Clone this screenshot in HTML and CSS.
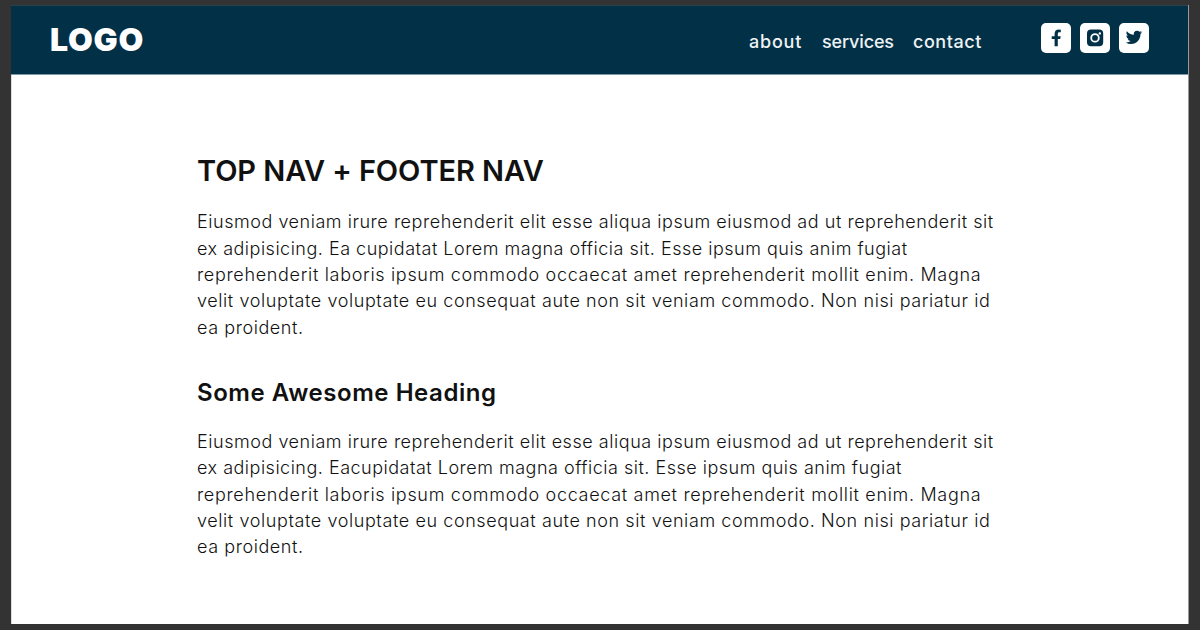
FILE: index.html
```html
<!DOCTYPE html>
<html lang="en">
<head>
<meta charset="utf-8">
<title>Top nav + footer nav</title>
<link rel="stylesheet" href="styles.css">
</head>
<body>
<div class="page">
  <header class="top">
    <a class="logo">LOGO</a>
    <nav class="links"><a class="about">about</a><a class="services">services</a><a class="contact">contact</a></nav>
    <div class="social">
      <a class="icon"><svg viewBox="0 0 30 30"><path d="M13.6 23.2v-7.1h-2.9v-2.9h2.9v-2.4c0-2.9 1.7-4.3 4.2-4.3l2 .2v2.6h-1.4c-1.2 0-1.6.7-1.6 1.5v2.4h2.900l-.5 2.9h-2.4v7.1z"/></svg></a>
      <a class="icon"><svg viewBox="0 0 30 30"><path fill-rule="evenodd" d="M11 6.5h8.2a4 4 0 0 1 4 4v8.700a4 4 0 0 1-4 4H11a4 4 0 0 1-4-4v-8.700a4 4 0 0 1 4-4zM15 10.200a4.700 4.700 0 1 0 0 9.400 4.700 4.700 0 0 0 0-9.400zm0 1.800a2.900 2.900 0 1 1 0 5.800 2.900 2.900 0 0 1 0-5.800zM19.800 9.200a1.200 1.200 0 1 0 0 2.400 1.200 1.200 0 0 0 0-2.400z"/></svg></a>
      <a class="icon"><svg viewBox="0 0 30 30"><path transform="translate(6.800 6.200) scale(.68)" d="M23.950 4.570a10 10 0 0 1-2.820.77 4.960 4.960 0 0 0 2.160-2.720c-.95.550-2 .950-3.130 1.180a4.920 4.920 0 0 0-8.380 4.480C7.690 8.090 4.070 6.130 1.640 3.160a4.820 4.820 0 0 0-.67 2.480c0 1.710.87 3.210 2.190 4.100a4.900 4.900 0 0 1-2.230-.62v.06a4.920 4.920 0 0 0 3.950 4.830 5 5 0 0 1-2.210.08 4.940 4.940 0 0 0 4.600 3.420A9.870 9.870 0 0 1 0 19.540a14 14 0 0 0 7.550 2.210c9.050 0 14-7.500 14-13.980l-.02-.64a9.940 9.940 0 0 0 2.420-2.560z"/></svg></a>
    </div>
  </header>
  <main class="content">
    <h1 class="title">TOP NAV + FOOTER NAV</h1>
    <p class="copy">
      <span class="line l1">Eiusmod veniam irure reprehenderit elit esse aliqua ipsum eiusmod ad ut reprehenderit sit</span>
      <span class="line l2">ex adipisicing. Ea cupidatat Lorem magna officia sit. Esse ipsum quis anim fugiat</span>
      <span class="line l3">reprehenderit laboris ipsum commodo occaecat amet reprehenderit mollit enim. Magna</span>
      <span class="line l4">velit voluptate voluptate eu consequat aute non sit veniam commodo. Non nisi pariatur id</span>
      <span class="line l5">ea proident.</span>
    </p>
    <h2 class="heading">Some Awesome Heading</h2>
    <p class="copy">
      <span class="line l1">Eiusmod veniam irure reprehenderit elit esse aliqua ipsum eiusmod ad ut reprehenderit sit</span>
      <span class="line l2">ex adipisicing. Eacupidatat Lorem magna officia sit. Esse ipsum quis anim fugiat</span>
      <span class="line l3">reprehenderit laboris ipsum commodo occaecat amet reprehenderit mollit enim. Magna</span>
      <span class="line l4">velit voluptate voluptate eu consequat aute non sit veniam commodo. Non nisi pariatur id</span>
      <span class="line l5">ea proident.</span>
    </p>
  </main>
</div>
</body>
</html>
```
FILE: styles.css
```css
* { box-sizing: border-box; }
body { margin: 0; height: 630px; padding: 5px 11px 6px; background: #333; overflow: hidden; font-family: Inter, sans-serif; }
.page { height: 619px; background: #fff; border-right: 1px solid #999; border-left: 1px solid #dcdcdc; }
.top { height: 70px; margin-left: -1px; padding: 0 39px; display: flex; align-items: center; background: #023047; border-top: 1px solid #25424d; border-bottom: 1px solid #7f98a5; color: #fff; }
.logo { font-size: 32px; font-weight: 900; line-height: 36px; letter-spacing: .8px; margin-right: auto; }
.links { display: flex; gap: 19px; font-size: 18px; font-weight: 500; line-height: 24px; color: #eef2f4; }
.links a { white-space: nowrap; padding-top: 3px; }
.about { width: 54px; letter-spacing: .8px; }
.services { width: 72px; letter-spacing: -.15px; }
.contact { width: 70px; letter-spacing: .55px; }
.social { display: flex; gap: 9px; margin-left: 58px; padding-bottom: 4px; }
.icon { width: 30px; height: 30px; border-radius: 5px; background: #fff; }
.icon svg { display: block; width: 30px; height: 30px; fill: #023047; }
.content { padding: 76px 0 0 185px; color: #111; }
.title { margin: 0; height: 40px; font-size: 29px; line-height: 40px; font-weight: 600; letter-spacing: -.08px; white-space: nowrap; }
.copy { margin: 18.350px 0 0; font-size: 18px; line-height: 26.300px; font-weight: 300; color: #111; }
.line { display: block; white-space: nowrap; }
.l1 { letter-spacing: .54px; }
.l2 { letter-spacing: .5px; }
.l3 { letter-spacing: .68px; }
.l4 { letter-spacing: .59px; }
.l5 { letter-spacing: .57px; }
.heading { margin: 36.150px 0 0; height: 32px; font-size: 24px; line-height: 32px; font-weight: 600; letter-spacing: .55px; white-space: nowrap; }
.heading + .copy { margin-top: 20px; }
```
